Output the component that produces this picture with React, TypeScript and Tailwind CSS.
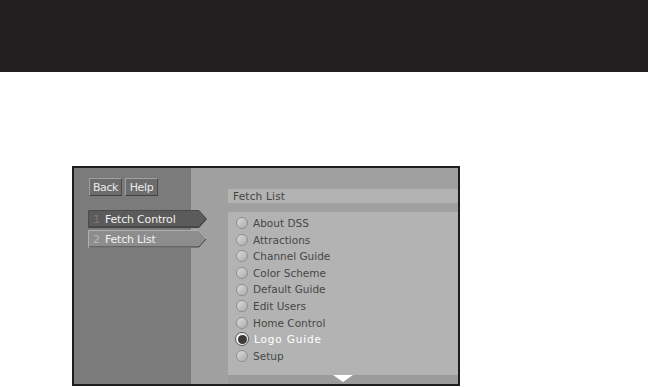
import React from 'react';

const ITEMS = [
  'About DSS',
  'Attractions',
  'Channel Guide',
  'Color Scheme',
  'Default Guide',
  'Edit Users',
  'Home Control',
  'Logo Guide',
  'Setup',
];
const SELECTED = 'Logo Guide';

const Radio: React.FC<{ on: boolean }> = ({ on }) =>
  on ? (
    <div className="w-[14px] h-[14px] rounded-full bg-[#f2f2f2] border border-[#555] flex items-center justify-center -ml-[1px]">
      <div className="w-[9px] h-[9px] rounded-full bg-[#3a3a3a]" />
    </div>
  ) : (
    <div className="w-[12px] h-[12px] rounded-full border border-[#8e8e8e] bg-gradient-to-br from-[#dcdcdc] to-[#ababab]" />
  );

const Tab: React.FC<{ num: string; label: string; active: boolean }> = ({ num, label, active }) => (
  <div className="relative w-[119px] h-[18px]">
    <svg className="absolute inset-0" width="119" height="18" viewBox="0 0 119 18">
      <polygon
        points="0.5,0.5 111,0.5 118.5,9 111,17.5 0.5,17.5"
        fill={active ? '#5b5b5b' : '#8d8d8d'}
        stroke={active ? '#4a4a4a' : '#b0b0b0'}
        strokeWidth="1"
      />
      <polyline points="1,17 111,17 118,9" fill="none" stroke="#3c3c3c" strokeWidth="1" />
    </svg>
    <div className="relative flex items-center h-full pl-[5px] text-[11px] leading-none tracking-[-0.2px]">
      <span className={`w-[12px] ${active ? 'text-[#7a7a7a]' : 'text-[#b8b8b8]'}`}>{num}</span>
      <span className="text-[#f2f2f2]">{label}</span>
    </div>
  </div>
);

const Btn: React.FC<{ label: string }> = ({ label }) => (
  <div className="w-[33px] h-[18px] flex items-center justify-center bg-[#6d6d6d] border border-t-[#a0a0a0] border-l-[#a0a0a0] border-r-[#4a4a4a] border-b-[#404040] text-[11px] leading-none tracking-[-0.4px] text-[#ececec]">
    {label}
  </div>
);

export default function App() {
  return (
    <div className="w-[648px] h-[387px] bg-white flex flex-col overflow-hidden" style={{ fontFamily: '"DejaVu Sans", "Open Sans", sans-serif' }}>
      <div className="h-[72px] bg-[#231f20]" />
      <div className="pt-[94px] pl-[72px]">
        <div className="w-[388px] h-[220px] border-2 border-[#1e1e1e] flex">
          {/* left nav */}
          <div className="w-[117px] bg-[#7b7b7b] pt-[10px] pl-[14px] flex flex-col">
            <div className="flex gap-[3px] pl-[1px]">
              <Btn label="Back" />
              <Btn label="Help" />
            </div>
            <div className="mt-[14px] flex flex-col gap-[2px]">
              <Tab num="1" label="Fetch Control" active />
              <Tab num="2" label="Fetch List" active={false} />
            </div>
          </div>
          {/* content */}
          <div className="flex-1 bg-[#a0a0a0] pl-[37px] pt-[21px] flex flex-col">
            <div className="h-[14px] bg-[#b3b3b3] flex items-center pl-[5px] text-[10.5px] leading-none text-[#444] tracking-[0.2px]">
              Fetch List
            </div>
            <div className="mt-[9px] h-[163px] bg-[#b3b3b3] pt-[3px] pl-[8px] flex flex-col">
              {ITEMS.map(item => {
                const on = item === SELECTED;
                return (
                  <div key={item} className="h-[16.6px] flex items-center gap-[5px]">
                    <Radio on={on} />
                    <span className={`text-[10.5px] leading-none ${on ? 'text-white tracking-[0.85px]' : 'text-[#474747]'}`}>
                      {item}
                    </span>
                  </div>
                );
              })}
            </div>
            <div className="flex-1 bg-[#9b9b9b] flex justify-center">
              <div className="w-0 h-0 border-l-[10px] border-r-[10px] border-t-[7px] border-l-transparent border-r-transparent border-t-white" />
            </div>
          </div>
        </div>
      </div>
    </div>
  );
}
